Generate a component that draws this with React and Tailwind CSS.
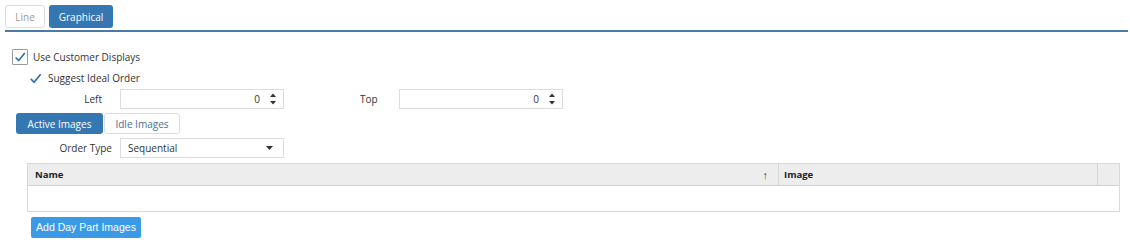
import React from 'react';

const Check = ({ size = 16 }) => (
  <svg width={size} height={size} viewBox="0 0 16 16">
    <path d="M3 8.5 L6.5 12 L13.5 3.5" fill="none" stroke="#2f6fa8" strokeWidth="1.8" />
  </svg>
);

const Spinner = () => (
  <svg width="8" height="14" viewBox="0 0 8 14" className="ml-[9px]">
    <path d="M1 5 L4 1.5 L7 5 Z" fill="#333" />
    <path d="M1 9 L4 12.5 L7 9 Z" fill="#333" />
  </svg>
);

const NumberBox = () => (
  <div className="flex h-[20px] w-[164px] items-center justify-end border border-[#dcdcdc] bg-white pr-[6px] text-[#333]">
    <span>0</span>
    <Spinner />
  </div>
);

const App = () => {
  return (
    <div className="h-[249px] w-[1130px] bg-white text-[10px] leading-none text-[#333]" style={{ fontFamily: '"Open Sans", "Noto Sans", sans-serif' }}>
      {/* tabs */}
      <div className="flex h-[28px] items-end gap-[4px] pl-[5px]">
        <div className="flex h-[23px] w-[40px] items-center justify-center rounded-[3px] border border-[#ddd] text-[#999]">Line</div>
        <div className="flex h-[23px] w-[64px] items-center justify-center rounded-[3px] bg-[#3577b2] text-white">Graphical</div>
      </div>
      <div className="ml-[5px] mr-[2px] mt-[2px] h-[2px] bg-[#4a7aa5]" />

      {/* checkboxes */}
      <div className="ml-[12px] mt-[17px] flex h-[16px] items-center gap-[5px]">
        <div className="flex h-[16px] w-[16px] items-center justify-center rounded-[1px] border border-[#9a9a9a] bg-white">
          <Check size={14} />
        </div>
        <span>Use Customer Displays</span>
      </div>
      <div className="ml-[28px] mt-[6px] flex h-[14px] items-center gap-[5px]">
        <Check size={15} />
        <span>Suggest Ideal Order</span>
      </div>

      {/* left / top */}
      <div className="mt-[4px] flex h-[20px] items-center">
        <div className="w-[102px] text-right">Left</div>
        <div className="ml-[18px]"><NumberBox /></div>
        <div className="ml-[76px] w-[17px]">Top</div>
        <div className="ml-[22px]"><NumberBox /></div>
      </div>

      {/* image tabs */}
      <div className="ml-[16px] mt-[4px] flex h-[21px]">
        <div className="flex h-[21px] w-[87px] items-center justify-center rounded-[3px] bg-[#3577b2] text-white">Active Images</div>
        <div className="ml-[1px] flex h-[21px] w-[76px] items-center justify-center rounded-[3px] border border-[#ddd] text-[#4a6f94]">Idle Images</div>
      </div>

      {/* order type */}
      <div className="mt-[4px] flex h-[20px] items-center">
        <div className="w-[112px] text-right">Order Type</div>
        <div className="ml-[8px] flex h-[20px] w-[164px] items-center justify-between border border-[#dcdcdc] bg-white pl-[7px] pr-[10px]">
          <span>Sequential</span>
          <svg width="7" height="4" viewBox="0 0 7 4"><path d="M0 0 L7 0 L3.5 4 Z" fill="#333" /></svg>
        </div>
      </div>

      {/* table */}
      <div className="ml-[27px] mt-[5px] w-[1093px] border border-[#d9d9d9]">
        <div className="flex h-[22px] items-center border-b border-[#d0d0d0] bg-[#ededed] text-[9.5px] font-bold text-[#222]">
          <div className="flex h-full flex-1 items-center justify-between border-r border-[#d6d6d6] pl-[7px] pr-[10px]">
            <span>Name</span>
            <span className="text-[11px] font-normal text-[#444]">↑</span>
          </div>
          <div className="flex h-full w-[319px] items-center border-r border-[#d6d6d6] pl-[5px]">Image</div>
          <div className="w-[21px]" />
        </div>
        <div className="h-[25px]" />
      </div>

      {/* button */}
      <div className="ml-[31px] mt-[5px]">
        <div className="flex h-[21px] w-[110px] items-center justify-center rounded-[2px] bg-[#3a9ae6] text-[10.5px] text-white" style={{ fontFamily: '"Liberation Sans", Arial, sans-serif' }}>
          Add Day Part Images
        </div>
      </div>
    </div>
  );
};

export default App;
